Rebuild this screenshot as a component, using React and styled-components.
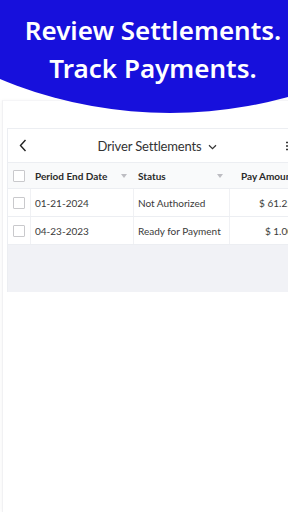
import React from 'react';
import styled, { createGlobalStyle } from 'styled-components';

const rows = [
  { id: 1, date: '01-21-2024', status: 'Not Authorized', amount: '$ 61.25' },
  { id: 2, date: '04-23-2023', status: 'Ready for Payment', amount: '$ 1.00' },
];

const App = () => {
  return (
    <Page>
      <GlobalStyle />
      <Hero>
        <HeroLine>Review Settlements.</HeroLine>
        <HeroLine>Track Payments.</HeroLine>
      </Hero>
      <Panel>
        <Card>
          <Toolbar>
            <IconButton aria-label="back">
              <svg width="8" height="13" viewBox="0 0 8 13">
                <polyline points="6.5,1 1.5,6.5 6.5,12" fill="none" stroke="#222" strokeWidth="1.4" />
              </svg>
            </IconButton>
            <TitleGroup>
              Driver Settlements
              <svg width="9" height="6" viewBox="0 0 9 6">
                <polyline points="1,1.2 4.5,4.6 8,1.2" fill="none" stroke="#333" strokeWidth="1.2" />
              </svg>
            </TitleGroup>
            <IconButton aria-label="menu">
              <svg width="11" height="10" viewBox="0 0 11 10">
                <path d="M0 1.5h11M0 5h11M0 8.5h11" stroke="#333" strokeWidth="1.3" />
              </svg>
            </IconButton>
          </Toolbar>
          <Table>
            <HeadRow>
              <CheckCell>
                <Checkbox />
              </CheckCell>
              <HeadCell>
                Period End Date
                <SortArrow />
              </HeadCell>
              <HeadCell>
                Status
                <SortArrow />
              </HeadCell>
              <HeadCell $right>Pay Amount</HeadCell>
            </HeadRow>
            {rows.map(row => (
              <BodyRow key={row.id}>
                <CheckCell $divider>
                  <Checkbox />
                </CheckCell>
                <BodyCell $divider>{row.date}</BodyCell>
                <BodyCell $divider>{row.status}</BodyCell>
                <BodyCell $right>{row.amount}</BodyCell>
              </BodyRow>
            ))}
            <EmptyArea />
          </Table>
        </Card>
      </Panel>
    </Page>
  );
};

export default App;

const GlobalStyle = createGlobalStyle`
  html, body {
    margin: 0;
    padding: 0;
    background: #ffffff;
    overflow: hidden;
  }
  body {
    font-family: Lato, "Liberation Sans", sans-serif;
  }
`;

const Page = styled.div`
  width: 288px;
  height: 512px;
  overflow: hidden;
  display: flex;
  flex-direction: column;
  background: #ffffff;
`;

const Hero = styled.div`
  position: relative;
  z-index: 1;
  flex: 0 0 auto;
  height: 113px;
  box-sizing: border-box;
  padding: 11px 0 0 18px;
  background: #1710dc;
  clip-path: ellipse(400px 359px at 170px -246px);
  display: flex;
  flex-direction: column;
  align-items: center;
  color: #ffffff;
`;

const HeroLine = styled.div`
  font-family: "Noto Sans", "Open Sans", sans-serif;
  font-weight: 600;
  font-size: 26px;
  line-height: 38px;
  white-space: nowrap;
`;

const Panel = styled.div`
  flex: 1;
  margin: -13px 0 0 2px;
  padding: 27px 0 0 4px;
  border-left: 1px solid #f1f1f3;
  border-top: 1px solid #f5f5f7;
  box-shadow: -1px 0 3px rgba(0, 0, 0, 0.03);
`;

const Card = styled.div`
  width: 294px;
  background: #ffffff;
  border-top: 1px solid #eceef2;
  border-left: 1px solid #eceef2;
`;

const Toolbar = styled.div`
  height: 33px;
  display: flex;
  align-items: center;
  justify-content: space-between;
  padding: 0 4px 0 8px;
  border-bottom: 1px solid #eceef2;
`;

const IconButton = styled.div`
  width: 13px;
  height: 16px;
  display: flex;
  align-items: center;
  justify-content: center;
`;

const TitleGroup = styled.div`
  display: flex;
  align-items: center;
  gap: 6px;
  font-size: 13px;
  color: #333333;
  letter-spacing: -0.15px;
  svg {
    margin-top: 2px;
  }
`;

const Table = styled.div`
  display: flex;
  flex-direction: column;
`;

const rowGrid = `
  display: grid;
  grid-template-columns: 23px 103px 96px 1fr;
  border-bottom: 1px solid #eceef2;
`;

const HeadRow = styled.div`
  ${rowGrid}
  height: 25px;
  background: #f9fafb;
`;

const BodyRow = styled.div`
  ${rowGrid}
  height: 27px;
  background: #ffffff;
`;

const CheckCell = styled.div`
  display: flex;
  align-items: center;
  padding-left: 5px;
  border-right: ${p => (p.$divider ? '1px solid #f0f1f4' : 'none')};
`;

const Checkbox = styled.span`
  width: 10px;
  height: 10px;
  border: 1px solid #c9c9cc;
  border-radius: 1px;
  background: #ffffff;
`;

const HeadCell = styled.div`
  display: flex;
  align-items: center;
  justify-content: ${p => (p.$right ? 'flex-end' : 'space-between')};
  padding: 0 7px 0 4px;
  font-size: 10px;
  font-weight: 700;
  color: #2a2a2a;
  white-space: nowrap;
`;

const SortArrow = styled.span`
  width: 0;
  height: 0;
  border-left: 3.5px solid transparent;
  border-right: 3.5px solid transparent;
  border-top: 4px solid #bdbdc2;
`;

const BodyCell = styled.div`
  display: flex;
  align-items: center;
  justify-content: ${p => (p.$right ? 'flex-end' : 'flex-start')};
  padding: ${p => (p.$right ? '0 9px 0 4px' : '0 4px')};
  font-size: 10px;
  color: #3a3a3a;
  white-space: nowrap;
  border-right: ${p => (p.$divider ? '1px solid #f0f1f4' : 'none')};
`;

const EmptyArea = styled.div`
  height: 47px;
  background: #f1f2f6;
`;
